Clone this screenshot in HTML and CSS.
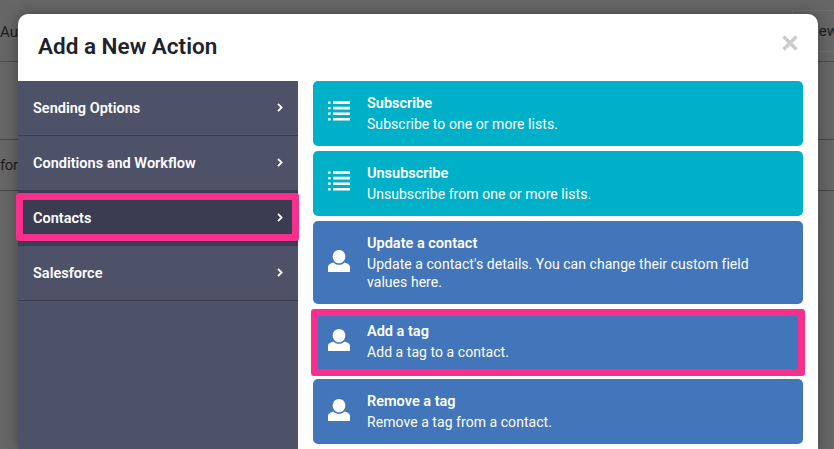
FILE: index.html
```html
<!DOCTYPE html>
<html lang="en">
<head>
    <meta charset="UTF-8">
    <meta name="viewport" content="width=device-width, initial-scale=1.0">
    <title>Add a New Action</title>
    <link rel="stylesheet" href="styles.css">
</head>
<body>
    <!-- Page behind the dialog -->
    <div class="page">
        <div class="page-header">
            <span class="page-title">Auto</span>
            <span class="page-button">View</span>
        </div>
        <div class="page-row page-row-blank"></div>
        <div class="page-row page-row-short"><span class="page-cell">form</span></div>
    </div>

    <!-- Dialog -->
    <div class="modal">
        <div class="modal-header">
            <h1>Add a New Action</h1>
            <svg class="close" viewBox="0 0 16 16" aria-label="Close">
                <path d="M1.500 1.500 L14.500 14.500 M14.500 1.500 L1.500 14.500"/>
            </svg>
        </div>
        <div class="modal-body">
            <ul class="sidebar">
                <li class="side-item">Sending Options <svg class="chev" viewBox="0 0 6 9"><path d="M1 .8 L4.600 4.500 L1 8.200"/></svg></li>
                <li class="side-item">Conditions and Workflow <svg class="chev" viewBox="0 0 6 9"><path d="M1 .8 L4.600 4.500 L1 8.200"/></svg></li>
                <li class="side-item active highlight">Contacts <svg class="chev" viewBox="0 0 6 9"><path d="M1 .8 L4.600 4.500 L1 8.200"/></svg></li>
                <li class="side-item">Salesforce <svg class="chev" viewBox="0 0 6 9"><path d="M1 .8 L4.600 4.500 L1 8.200"/></svg></li>
            </ul>
            <div class="actions">
                <div class="card teal">
                    <svg class="icon" viewBox="0 0 22 22"><use href="#list"/></svg>
                    <div class="card-text">
                        <h2>Subscribe</h2>
                        <p>Subscribe to one or more lists.</p>
                    </div>
                </div>
                <div class="card teal">
                    <svg class="icon" viewBox="0 0 22 22"><use href="#list"/></svg>
                    <div class="card-text">
                        <h2>Unsubscribe</h2>
                        <p>Unsubscribe from one or more lists.</p>
                    </div>
                </div>
                <div class="card blue">
                    <svg class="icon" viewBox="0 0 22 22"><use href="#person"/></svg>
                    <div class="card-text">
                        <h2>Update a contact</h2>
                        <p>Update a contact's details. You can change their custom field values here.</p>
                    </div>
                </div>
                <div class="card blue highlight">
                    <svg class="icon" viewBox="0 0 22 22"><use href="#person"/></svg>
                    <div class="card-text">
                        <h2>Add a tag</h2>
                        <p>Add a tag to a contact.</p>
                    </div>
                </div>
                <div class="card blue">
                    <svg class="icon" viewBox="0 0 22 22"><use href="#person"/></svg>
                    <div class="card-text">
                        <h2>Remove a tag</h2>
                        <p>Remove a tag from a contact.</p>
                    </div>
                </div>
            </div>
        </div>
    </div>

    <!-- Shared icons -->
    <svg class="defs" aria-hidden="true">
        <symbol id="list" viewBox="0 0 22 22">
            <path d="M0 .5h2.600v2.200H0zM0 6h2.600v2.200H0zM0 11.600h2.600v2.200H0zM0 17.200h2.600v2.200H0zM5 .3h17v2.600H5zM5 5.800h17v2.600H5zM5 11.400h17v2.600H5zM5 17h17v2.600H5z"/>
        </symbol>
        <symbol id="person" viewBox="0 0 22 22">
            <path d="M11 0c3.600 0 6.300 2.800 6.300 6.400 0 3.800-2.700 6.900-6.300 6.900S4.700 10.200 4.700 6.400C4.700 2.800 7.400 0 11 0z"/>
            <path d="M5.500 12.400c1.300 1.500 3.300 2.400 5.500 2.400s4.200-.9 5.500-2.400l2.800 1.100c1.700.7 2.700 2 2.700 3.700V22H0v-4.800c0-1.700 1-3 2.700-3.700z"/>
        </symbol>
    </svg>
</body>
</html>
```

FILE: styles.css
```css
* {
    box-sizing: border-box;
}

html, body {
    height: 100%;
}

body {
    margin: 0;
    overflow: hidden;
    background-color: #666666;
    font-family: Roboto, "Liberation Sans", sans-serif;
    color: #1f2129;
}

/* Page behind the dialog */
.page {
    height: 100%;
    color: #1d1d1d;
    font-size: 15px;
}

.page-header {
    display: flex;
    justify-content: space-between;
    align-items: center;
    height: 62px;
    border-bottom: 1px solid #4b4b4b;
}

.page-title {
    margin-top: 2px;
}

.page-button {
    margin-right: -4px;
    padding: 11px 0 11px 13px;
    border: 1px solid #707070;
    border-right: none;
}

.page-row {
    display: flex;
    align-items: center;
    height: 78px;
    border-bottom: 1px solid #464646;
}

.page-row-short {
    height: 51px;
}

.page-cell {
    letter-spacing: -0.4px;
}

/* Dialog */
.modal {
    position: absolute;
    top: 14px;
    left: 18px;
    width: 800px;
    height: 435px;
    background-color: #ffffff;
    border-radius: 10px 10px 0 0;
    box-shadow: 0 0 14px rgba(0, 0, 0, 0.35);
}

.modal-header {
    display: flex;
    justify-content: space-between;
    align-items: center;
    height: 67px;
    padding: 0 20px;
}

h1 {
    margin: 0 0 3px;
    font-size: 22.500px;
    font-weight: 600;
    color: #20222b;
}

.close {
    width: 16px;
    height: 16px;
    margin-bottom: 10px;
    fill: none;
    stroke: #cccccc;
    stroke-width: 3.500;
}

.modal-body {
    display: flex;
    height: 368px;
}

/* Left menu */
.sidebar {
    flex: none;
    width: 280px;
    margin: 0;
    padding: 0;
    list-style: none;
    background-color: #4e5269;
}

.side-item {
    display: flex;
    justify-content: space-between;
    align-items: center;
    height: 55px;
    padding: 0 15px;
    border-bottom: 1px solid #3a3d50;
    color: #ffffff;
    font-size: 14.500px;
    font-weight: 600;
}

.side-item.active {
    background-color: #3a3d52;
}

.chev {
    width: 6px;
    height: 9px;
    margin-bottom: 2px;
    fill: none;
    stroke: #ffffff;
    stroke-width: 1.800;
}

/* Action cards */
.actions {
    flex: 1;
    display: flex;
    flex-direction: column;
    gap: 5px;
    padding: 0 15px;
}

.card {
    display: flex;
    align-items: center;
    padding: 13px 15px;
    border-radius: 5px;
    color: #ffffff;
}

.teal {
    background-color: #00b0c8;
}

.blue {
    background-color: #4275b9;
}

.icon {
    flex: none;
    width: 22px;
    height: 22px;
    margin-bottom: 3px;
    fill: #ffffff;
}

.card-text {
    margin-left: 17px;
}

h2 {
    margin: 0 0 2px;
    font-size: 14.500px;
    line-height: 19px;
    font-weight: 600;
}

.card p {
    margin: 0;
    font-size: 14px;
    line-height: 18px;
    letter-spacing: 0.05px;
}

/* Pink annotation boxes */
.highlight {
    position: relative;
}

.highlight::after {
    content: "";
    position: absolute;
    inset: 2px -1px 4px -2px;
    border: 7px solid #f92f8e;
    border-radius: 3px;
}

.card.highlight::after {
    inset: 0 -2px -2px -2px;
}

.defs {
    display: none;
}
```
